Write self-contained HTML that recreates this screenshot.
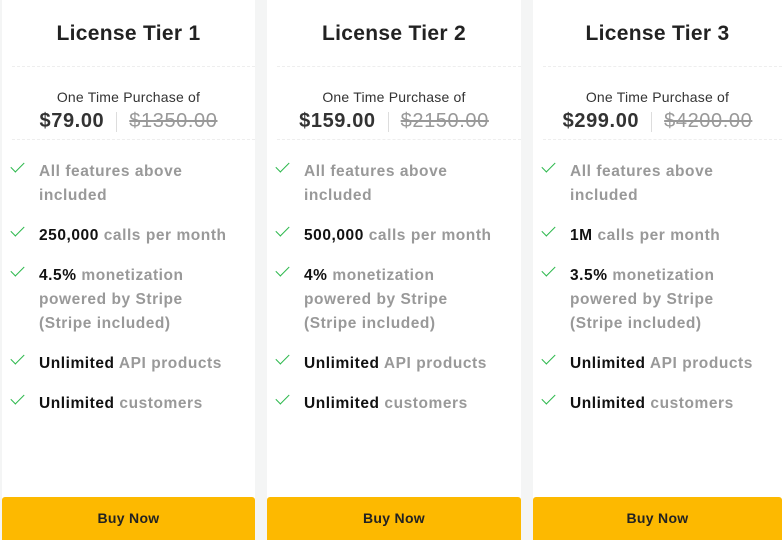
<!DOCTYPE html><html><head><style>
body{margin:0;width:782px;height:540px;background:#f4f5f5;font-family:"Liberation Sans",sans-serif;position:relative;overflow:hidden}
.c{position:absolute;top:0;height:540px;background:#fff}
.t{position:absolute;top:22px;left:0;right:0;text-align:center;font-size:21px;font-weight:bold;color:#222;letter-spacing:0.3px}
.hr{position:absolute;left:10px;right:0;border-top:1px dashed #eee}
.o{position:absolute;top:89px;left:0;right:0;text-align:center;font-size:14px;color:#333;letter-spacing:0.2px}
.p{position:absolute;top:110px;left:0;right:0;text-align:center;font-size:20px;white-space:nowrap;letter-spacing:0.6px}
.p b{color:#333}.p s{color:#999;font-weight:normal}
.p i{display:inline-block;width:1px;height:20px;background:#ddd;vertical-align:middle;margin:0 12px}
ul{position:absolute;top:160px;left:0;margin:0;padding:0;list-style:none;font-size:15.5px;line-height:24px;color:#999;font-weight:bold;letter-spacing:0.55px}
li{position:relative;padding-left:37px;margin-bottom:16px}
li b{color:#111}
li:before{content:"";position:absolute;left:12px;top:-1px;width:6px;height:12px;border:solid #2db84d;border-width:0 1.6px 1.6px 0;transform:rotate(45deg)}
.btn{position:absolute;bottom:0;left:0;right:0;height:43px;background:#fdb900;border-radius:3px 3px 0 0;text-align:center;line-height:43px;font-size:14px;color:#222;font-weight:bold;letter-spacing:0.3px}
</style></head><body>
<div class="c" style="left:2px;width:253px">
<div class="t">License Tier 1</div><div class="hr" style="top:66px"></div>
<div class="o">One Time Purchase of</div>
<div class="p"><b>$79.00</b><i></i><s>$1350.00</s></div><div class="hr" style="top:139px"></div>
<ul><li>All features above<br>included</li><li><b>250,000</b> calls per month</li><li><b>4.5%</b> monetization<br>powered by Stripe<br>(Stripe included)</li><li><b>Unlimited</b> API products</li><li><b>Unlimited</b> customers</li></ul>
<div class="btn">Buy Now</div></div>
<div class="c" style="left:267px;width:254px">
<div class="t">License Tier 2</div><div class="hr" style="top:66px"></div>
<div class="o">One Time Purchase of</div>
<div class="p"><b>$159.00</b><i></i><s>$2150.00</s></div><div class="hr" style="top:139px"></div>
<ul><li>All features above<br>included</li><li><b>500,000</b> calls per month</li><li><b>4%</b> monetization<br>powered by Stripe<br>(Stripe included)</li><li><b>Unlimited</b> API products</li><li><b>Unlimited</b> customers</li></ul>
<div class="btn">Buy Now</div></div>
<div class="c" style="left:533px;width:249px">
<div class="t">License Tier 3</div><div class="hr" style="top:66px"></div>
<div class="o">One Time Purchase of</div>
<div class="p"><b>$299.00</b><i></i><s>$4200.00</s></div><div class="hr" style="top:139px"></div>
<ul><li>All features above<br>included</li><li><b>1M</b> calls per month</li><li><b>3.5%</b> monetization<br>powered by Stripe<br>(Stripe included)</li><li><b>Unlimited</b> API products</li><li><b>Unlimited</b> customers</li></ul>
<div class="btn">Buy Now</div></div>
</body></html>
